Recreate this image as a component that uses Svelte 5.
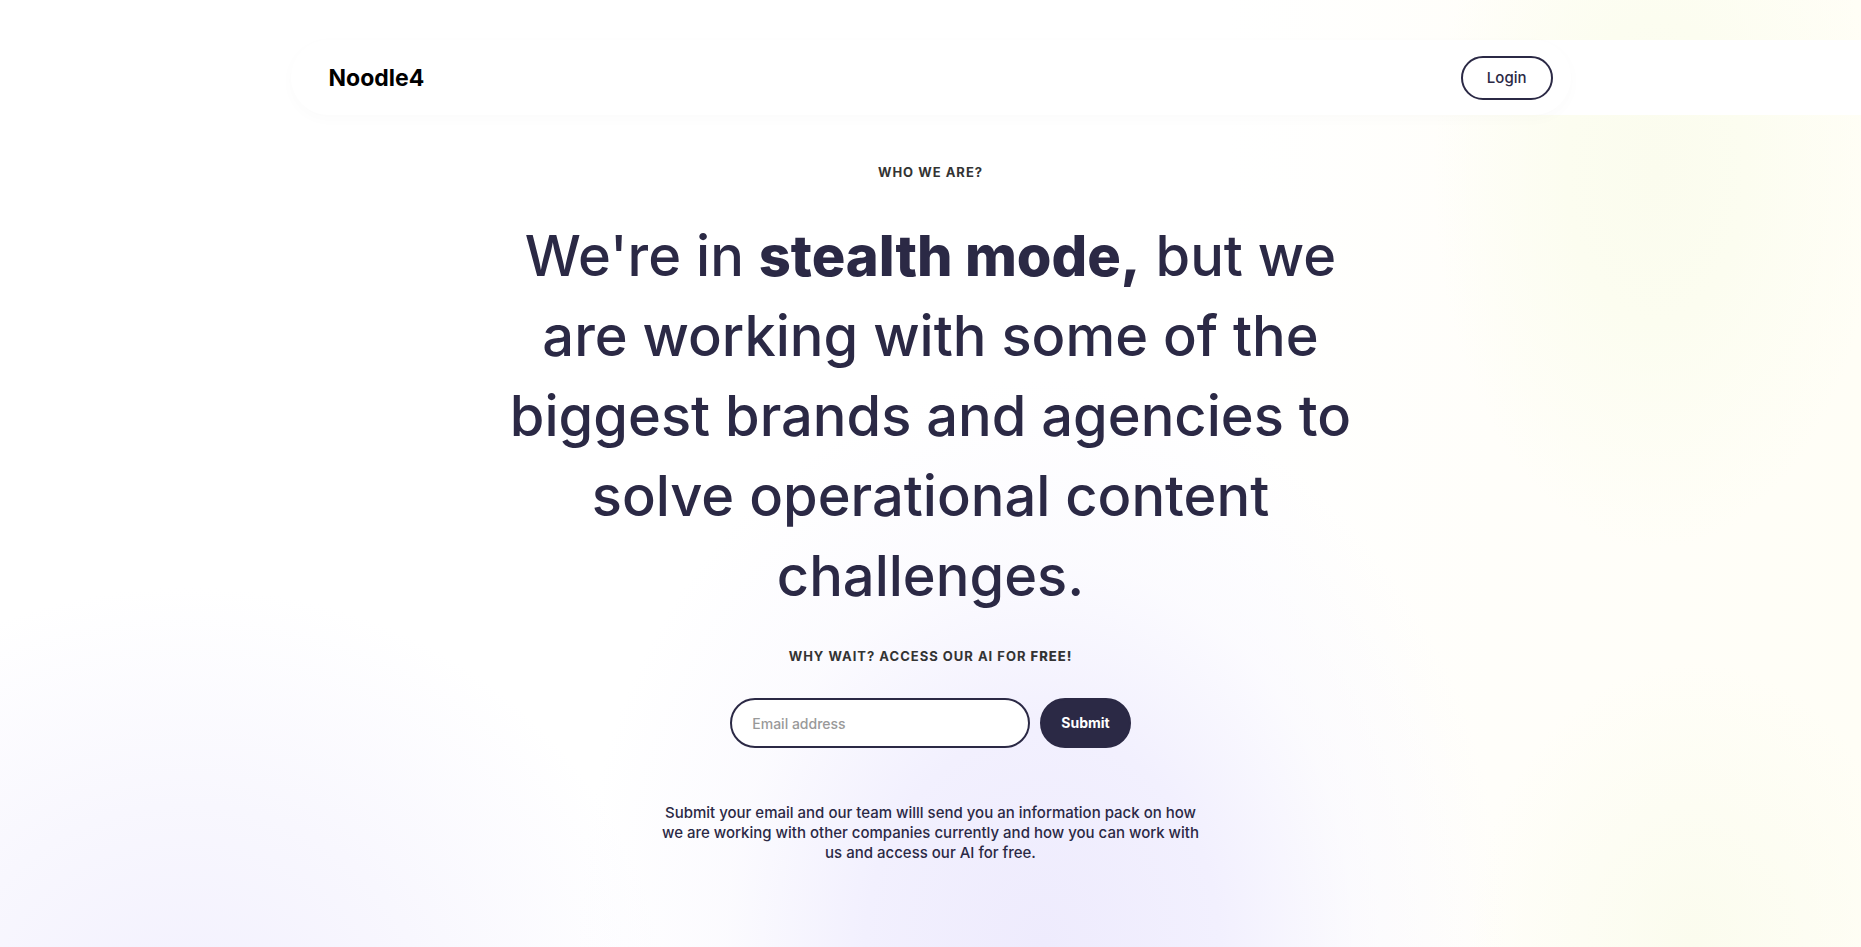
<script>
  let email = $state('');
</script>

<div class="page">
  <header>
    <nav>
      <a class="brand" href="#home">Noodle4</a>
      <a class="login" href="#login">Login</a>
    </nav>
  </header>

  <main>
    <p class="label">Who we are?</p>
    <h1>We're in <strong>stealth mode,</strong> but we are working with some of the biggest brands and agencies to solve operational content challenges.</h1>
    <p class="label">Why wait? Access our AI for <strong>free!</strong></p>
    <form onsubmit={(event) => event.preventDefault()}>
      <input type="email" aria-label="Email address" placeholder="Email address" bind:value={email} />
      <button type="submit">Submit</button>
    </form>
    <p class="note">Submit your email and our team willl send you an information pack on how we are working with other companies currently and how you can work with us and access our AI for free.</p>
  </main>
</div>

<style>
  :global(body) {
    margin: 0;
    background: #fff;
  }

  .page {
    box-sizing: border-box;
    min-height: 100vh;
    padding-top: 40px;
    color: #2b2945;
    font-family: Inter, 'Liberation Sans', sans-serif;
    background:
      radial-gradient(ellipse 25% 60% at 56% 100%, #eeebfd 0%, #f2f0fe 38%, #f9f8fe99 68%, #ffffff00 100%),
      radial-gradient(ellipse 26% 46% at 10% 108%, #f2f0fe 0%, #f8f7fe 50%, #ffffff00 100%),
      radial-gradient(ellipse 12% 40% at 89% 18%, #fbfcee 0%, #fcfdf0 40%, #fffef600 100%),
      radial-gradient(ellipse 12% 30% at 91% 100%, #fbfcee 0%, #fffef600 100%),
      linear-gradient(90deg, #fff 66%, #fffefa 80%, #fffef6 100%);
  }

  header {
    background: #fff;
  }

  nav {
    box-sizing: border-box;
    display: flex;
    align-items: center;
    justify-content: space-between;
    max-width: 1280px;
    height: 75px;
    margin: 0 auto;
    padding: 0 18px 0 38px;
    border-radius: 38px;
    box-shadow: 0 4px 12px 2px #00000004;
  }

  a {
    color: inherit;
    text-decoration: none;
  }

  .brand {
    color: #000;
    font-size: 23px;
    font-weight: 700;
  }

  .login {
    padding: 10px 24px;
    border: 2px solid #2b2945;
    border-radius: 22px;
    font-size: 15px;
    font-weight: 500;
    line-height: 20px;
  }

  main {
    display: flex;
    flex-direction: column;
    align-items: center;
    padding: 47px 24px 84px;
    text-align: center;
  }

  p,
  h1 {
    margin: 0;
  }

  .label {
    color: #333;
    font-size: 13px;
    font-weight: 700;
    line-height: 20px;
    letter-spacing: 1px;
    text-transform: uppercase;
  }

  .label strong {
    font-weight: 800;
  }

  h1 {
    max-width: 880px;
    margin: 34px 0 30px;
    font-size: 56px;
    font-weight: 500;
    line-height: 80px;
  }

  h1 strong {
    font-weight: 800;
  }

  form {
    display: flex;
    flex-wrap: wrap;
    justify-content: center;
    gap: 10px;
    margin: 32px 0 55px;
  }

  input,
  button {
    box-sizing: border-box;
    height: 50px;
    padding: 0 20px;
    border: 2px solid #2b2945;
    border-radius: 25px;
    color: #2b2945;
    font: 500 14px/20px Inter, 'Liberation Sans', sans-serif;
  }

  input {
    width: 300px;
    background: #fff;
  }

  input::placeholder {
    color: #999;
  }

  button {
    padding: 0 19px;
    color: #fff;
    font-weight: 700;
    background: #2b2945;
    cursor: pointer;
  }

  .note {
    max-width: 548px;
    font-size: 15px;
    font-weight: 500;
    line-height: 20px;
  }
</style>
